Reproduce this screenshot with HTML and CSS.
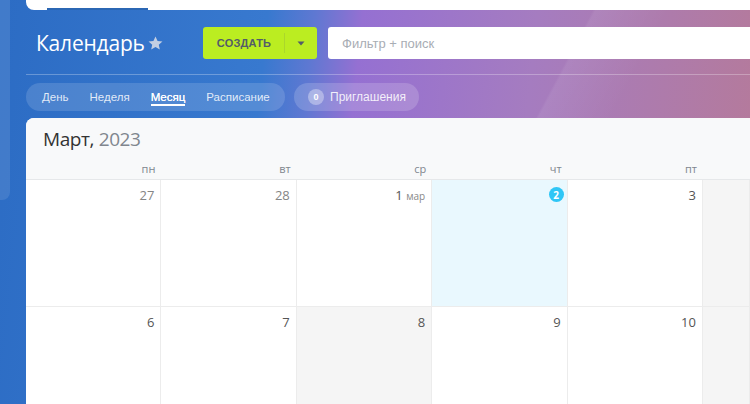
FILE: index.html
```html
<!DOCTYPE html>
<html lang="ru">
<head>
<meta charset="utf-8">
<title>Календарь</title>
<link rel="stylesheet" href="styles.css">
</head>
<body>
<div class="page">
  <div class="rail"><div class="rail-panel"></div></div>
  <div class="main">
    <div class="topbar"><div class="tab-line"></div></div>
    <div class="header">
      <div class="title">
        <span class="title-text">Календарь</span>
        <svg class="star" width="17" height="17" viewBox="0 0 24 24"><path d="M12 2.2l2.9 6.3 6.9.7-5.2 4.6 1.5 6.8L12 17.1l-6.1 3.5 1.5-6.8-5.2-4.6 6.9-.7z" fill="#c3cfe3"/></svg>
      </div>
      <div class="create">
        <span class="create-label">СОЗДАТЬ</span>
        <span class="create-arrow"><svg width="8" height="5" viewBox="0 0 8 5"><path d="M0.5 0.5h7L4 4.5z" fill="#535c69"/></svg></span>
      </div>
      <div class="search">Фильтр + поиск</div>
    </div>
    <div class="divider"></div>
    <div class="nav">
      <div class="views">
        <span class="view">День</span>
        <span class="view">Неделя</span>
        <span class="view active">Месяц</span>
        <span class="view">Расписание</span>
      </div>
      <div class="invites"><span class="inv-count">0</span><span>Приглашения</span></div>
    </div>
    <div class="card">
      <div class="card-head">
        <div class="month"><span class="m-name">Март,</span> <span class="m-year">2023</span></div>
        <div class="weekdays">
          <span>пн</span><span>вт</span><span>ср</span><span>чт</span><span>пт</span><span></span>
        </div>
      </div>
      <div class="grid">
        <div class="cell"><span class="num dim">27</span></div>
        <div class="cell"><span class="num dim">28</span></div>
        <div class="cell"><span class="num">1 <small>мар</small></span></div>
        <div class="cell today"><span class="today-badge">2</span></div>
        <div class="cell"><span class="num">3</span></div>
        <div class="cell off"></div>
        <div class="cell"><span class="num">6</span></div>
        <div class="cell"><span class="num">7</span></div>
        <div class="cell off"><span class="num">8</span></div>
        <div class="cell"><span class="num">9</span></div>
        <div class="cell"><span class="num">10</span></div>
        <div class="cell off"></div>
      </div>
    </div>
  </div>
</div>
</body>
</html>
```

FILE: styles.css
```css
* { box-sizing: border-box; }
html, body { margin: 0; padding: 0; }
body {
  width: 750px;
  height: 404px;
  overflow: hidden;
  font-family: "Open Sans", "Liberation Sans", sans-serif;
  background:
    linear-gradient(118deg, rgba(255,255,255,0) 62%, rgba(255,255,255,0.07) 62.3%, rgba(255,255,255,0) 70%),
    linear-gradient(96deg, #2c6cc4 0%, #3879cf 34%, #5f78d2 40%, #9570d2 46%, #a57cc0 68%, #b67a98 100%);
}
.page { display: flex; height: 404px; }
.rail { width: 26px; flex: none; }
.rail-panel {
  width: 10px; height: 200px;
  background: rgba(255,255,255,0.1);
  border-bottom-right-radius: 8px;
}
.main { flex: 1; min-width: 0; display: flex; flex-direction: column; }
.topbar {
  height: 10px; background: #fff;
  border-bottom-left-radius: 8px;
  position: relative;
}
.tab-line {
  position: absolute; left: 21px; bottom: 0;
  width: 101px; height: 2px; background: #2b67b4;
}
.header {
  margin-top: 17px; height: 32px;
  display: flex; align-items: center;
}
.title { width: 177px; padding-left: 10px; display: flex; align-items: center; gap: 2px; }
.title-text { color: #fff; font-size: 21px; line-height: 32px; letter-spacing: -0.2px; }
.star { margin-top: 1px; }
.create {
  width: 114px; height: 32px; background: #bbed21;
  border-radius: 3px; display: flex; align-items: stretch;
}
.create-label {
  flex: 1; display: flex; align-items: center; justify-content: center;
  font-family: "Liberation Sans", Arial, sans-serif; font-weight: bold;
  font-size: 11px; color: #535c69; letter-spacing: 0.2px;
  border-right: 1px solid rgba(83,92,105,0.15);
  margin: 6px 0; padding-left: 1px;
}
.create-arrow { width: 32px; display: flex; align-items: center; justify-content: center; }
.search {
  flex: 1; margin-left: 11px; height: 32px; background: #fff;
  border-radius: 3px 0 0 3px; padding-left: 14px;
  display: flex; align-items: center;
  font-family: "Liberation Sans", Arial, sans-serif; font-size: 13px; color: #a8adb4;
}
.divider { margin-top: 15px; height: 1px; background: rgba(255,255,255,0.28); }
.nav { margin-top: 8px; height: 28px; display: flex; gap: 9px; }
.views {
  width: 259px; height: 28px; border-radius: 14px;
  background: rgba(255,255,255,0.14);
  display: flex; align-items: center; padding-left: 16px; gap: 21px;
  font-family: "Liberation Sans", Arial, sans-serif;
}
.view {
  font-size: 11.5px; color: rgba(255,255,255,0.85);
  line-height: 16px;
}
.view.active { color: #fff; border-bottom: 2px solid #fff; line-height: 14px; margin-top: 2px; text-shadow: 0 0 0.4px #fff; }
.invites {
  width: 125px; height: 28px; border-radius: 14px;
  background: rgba(255,255,255,0.17);
  display: flex; align-items: center; padding-left: 14px; gap: 6px;
  font-family: "Liberation Sans", Arial, sans-serif;
  font-size: 12px; color: rgba(255,255,255,0.88);
}
.inv-count {
  width: 16px; height: 16px; border-radius: 50%;
  background: rgba(255,255,255,0.35); color: #fff;
  font-size: 9px; font-weight: 700;
  display: flex; align-items: center; justify-content: center;
}
.card {
  margin-top: 7px; flex: 1; background: #fff;
  border-top-left-radius: 8px; overflow: hidden;
}
.card-head { background: #f8f9fa; border-bottom: 1px solid #e6e8ea; }
.month { height: 42px; padding: 8px 0 0 17px; font-size: 19px; line-height: 26px; letter-spacing: -0.4px; }
.m-name { color: #333; }
.m-year { color: #80868e; }
.weekdays { display: grid; grid-template-columns: repeat(5, 135.4px) 1fr; height: 19px; }
.weekdays span {
  text-align: right; padding-right: 6px; font-size: 11px; color: #80868e; line-height: 18px;
}
.grid {
  display: grid; grid-template-columns: repeat(5, 135.4px) 1fr;
  grid-auto-rows: 127px;
}
.cell {
  border-right: 1px solid #ececec; border-bottom: 1px solid #ececec;
  display: flex; justify-content: flex-end; align-items: flex-start;
  padding: 6px 6px 0 0; background: #fff;
}
.cell.off { background: #f5f5f5; }
.cell.today { background: #e9f8fe; padding: 6px 3px 0 0; }
.num { font-size: 13px; color: #555; line-height: 18px; }
.num.dim { color: #858585; }
.num small { font-size: 10px; color: #888; }
.today-badge {
  width: 15px; height: 15px; border-radius: 50%; background: #2fc6f6;
  color: #fff; font-size: 10px; font-weight: 700; margin-top: 1px;
  display: flex; align-items: center; justify-content: center;
}
```
